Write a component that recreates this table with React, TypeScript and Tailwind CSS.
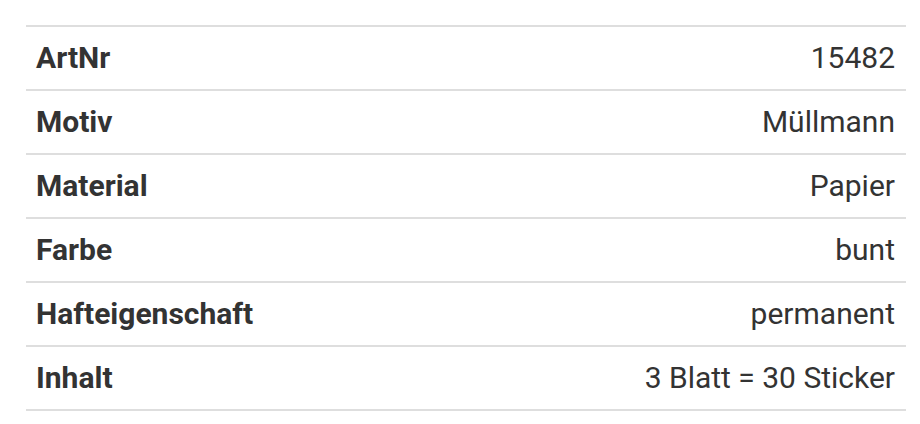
const rows: [string, string][] = [
  ['ArtNr', '15482'],
  ['Motiv', 'Müllmann'],
  ['Material', 'Papier'],
  ['Farbe', 'bunt'],
  ['Hafteigenschaft', 'permanent'],
  ['Inhalt', '3 Blatt = 30 Sticker'],
];

export default function App() {
  return (
    <div className="w-[920px] h-[424px] bg-white pt-[25px] pl-[26px]" style={{ fontFamily: 'Roboto, "Noto Sans", sans-serif' }}>
      <table className="w-[880px] border-collapse text-[30px] text-[#333]">
        <tbody>
          {rows.map(([label, value]) => (
            <tr key={label} className="border-y-2 border-[#dedede]">
              <td className="h-[64px] px-[10px] pb-[2px] font-bold">{label}</td>
              <td className="h-[64px] px-[11px] pb-[2px] text-right">{value}</td>
            </tr>
          ))}
        </tbody>
      </table>
    </div>
  );
}
